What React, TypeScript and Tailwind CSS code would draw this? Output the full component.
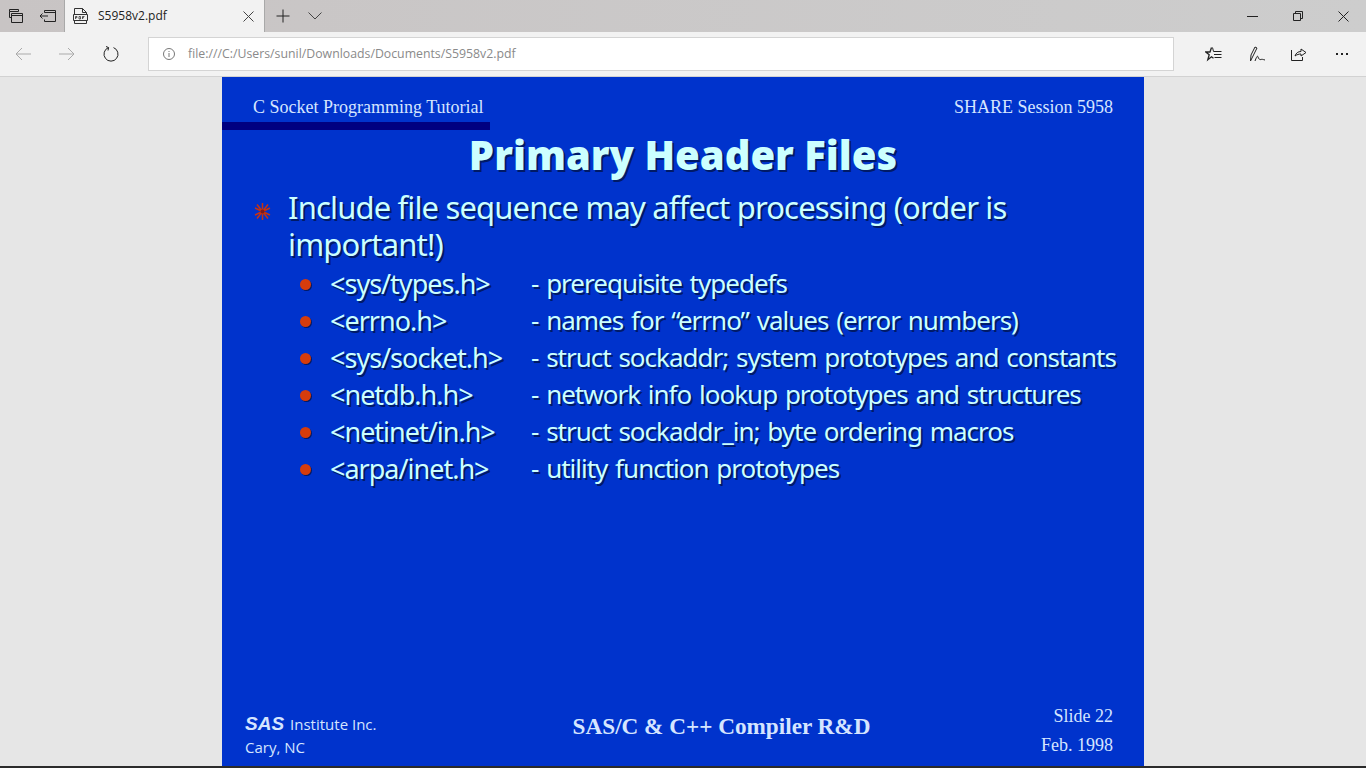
const FILES = [
  { name: '<sys/types.h>', desc: '- prerequisite typedefs' },
  { name: '<errno.h>', desc: '- names for “errno” values (error numbers)' },
  { name: '<sys/socket.h>', desc: '- struct sockaddr; system prototypes and constants' },
  { name: '<netdb.h.h>', desc: '- network info lookup prototypes and structures' },
  { name: '<netinet/in.h>', desc: '- struct sockaddr_in; byte ordering macros' },
  { name: '<arpa/inet.h>', desc: '- utility function prototypes' },
];

function TabBar() {
  return (
    <div className="flex h-[32px] bg-gradient-to-r from-[#c8c4c4] to-[#cdcdcd] text-[#1a1a1a]">
      <div className="flex items-center w-[65px] pl-[9px] gap-[15px] border-r border-[#a9a9a9]">
        <svg width="15" height="14" viewBox="0 0 15 14" fill="none" stroke="#222" strokeWidth="1">
          <path d="M.5.5h9v2h-9zM.5 2.500v6h2M2.500 4.500h11v9h-11v-9zM2.500 6.500h11" />
        </svg>
        <svg width="17" height="12" viewBox="0 0 17 12" fill="none" stroke="#222" strokeWidth="1">
          <path d="M5.500 2.500v-2h11v11h-11v-2M5.500 2.500h11M9 6H1M3.500 3.500 1 6l2.500 2.500" />
        </svg>
      </div>
      <div className="flex items-center w-[200px] bg-[#f2f2f2] pl-[8px] pr-[11px]">
        <svg width="15" height="16" viewBox="0 0 15 16" fill="none" stroke="#333" strokeWidth="1">
          <path d="M1.500 6V.5h8l4 4V6M9.500.5v4h4M1.500 13v2.500h12V13M.5 6.500h14v6H.5z" />
          <path d="M2.500 11V8.500h1.500v1.200H2.500M6 8.500v2.500h1.500V8.500zM9.500 11V8.500h2M9.500 9.700h1.500" strokeWidth=".8" />
        </svg>
        <span className="ml-[10px] text-[12px] text-[#222] font-['Open_Sans',sans-serif]">S5958v2.pdf</span>
        <svg className="ml-auto" width="11" height="11" viewBox="0 0 11 11" fill="none" stroke="#444" strokeWidth="1">
          <path d="m.5.500 10 10M10.500.500l-10 10" />
        </svg>
      </div>
      <div className="flex items-center pl-[11px] border-l border-[#a9a9a9] -ml-px">
        <svg width="14" height="14" viewBox="0 0 14 14" fill="none" stroke="#222" strokeWidth="1">
          <path d="M7 .5v13M.5 7h13" />
        </svg>
        <svg className="ml-[18px]" width="14" height="8" viewBox="0 0 14 8" fill="none" stroke="#444" strokeWidth="1">
          <path d="m.5.500 6.500 6.500 6.500-6.500" />
        </svg>
      </div>
      <div className="ml-auto flex items-center">
        <div className="w-[46px] flex justify-center">
          <svg width="11" height="11" viewBox="0 0 11 11" stroke="#222"><path d="M0 5.500h11" /></svg>
        </div>
        <div className="w-[46px] flex justify-center">
          <svg width="10" height="10" viewBox="0 0 10 10" fill="none" stroke="#222"><path d="M.5 2.500h7v7h-7zM2.500 2.500v-2h7v7h-2" /></svg>
        </div>
        <div className="w-[45px] flex justify-center">
          <svg width="11" height="11" viewBox="0 0 11 11" fill="none" stroke="#222"><path d="m.5.500 10 10M10.500.500l-10 10" /></svg>
        </div>
      </div>
    </div>
  );
}

function Toolbar() {
  return (
    <div className="flex items-center h-[44px] bg-[#f2f2f2] border-b border-[#d2d2d2] box-content">
      <div className="flex items-center w-[148px] pl-[15px]">
        <svg width="16" height="14" viewBox="0 0 16 14" fill="none" stroke="#aaa"><path d="M16 7H1M7 1 1 7l6 6" /></svg>
        <svg className="ml-[28px]" width="16" height="14" viewBox="0 0 16 14" fill="none" stroke="#aaa"><path d="M0 7h15M9 1l6 6-6 6" /></svg>
        <svg className="ml-[28px]" width="16" height="16" viewBox="0 0 16 16" fill="none" stroke="#222"><path d="M5.500 1.600A7 7 0 1 0 10.500 1.600M3 .5l2.600 1.100L5 4.500" /></svg>
      </div>
      <div className="flex items-center w-[1026px] h-[34px] bg-white border border-[#d4d4d4] pl-[14px]">
        <svg width="12" height="12" viewBox="0 0 12 12" fill="none" stroke="#777"><circle cx="6" cy="6" r="5.500" /><path d="M6 5v4M6 3v1" /></svg>
        <span className="ml-[13px] mt-[1px] text-[12.300px] text-[#8a8a8a] font-['Open_Sans',sans-serif]">file:///C:/Users/sunil/Downloads/Documents/S5958v2.pdf</span>
      </div>
      <div className="flex items-center flex-1 pl-[31px]">
        <svg width="17" height="17" viewBox="0 0 17 17" fill="none" stroke="#222">
          <path d="M6.500 1.500 5 6H.8l3.400 2.700-1.400 5 3.700-3 2 1.500" strokeWidth="1.300" />
          <path d="M7.500 1.500 8.500 5.500H16.500M9 8.500h7.500M9.500 11.500h7" />
        </svg>
        <svg className="ml-[27px]" width="17" height="17" viewBox="0 0 17 17" fill="none" stroke="#222">
          <path d="M1.500 15 2 9l4-8 2 1-4 8zM6 15c1.500-4 2.500-6 3-4s2 3 3 2.500 2 0 4 .5" />
        </svg>
        <svg className="ml-[25px]" width="16" height="14" viewBox="0 0 16 14" fill="none" stroke="#222">
          <path d="M.5 3v10.500h11V10M4 9c1-3 3-4.500 6-4.500V2l5 3.500L10 9V7C8 7 6 7.500 4 9z" />
        </svg>
        <span className="ml-[29px] flex gap-[3px]">
          <i className="w-[2px] h-[2px] bg-[#222]" />
          <i className="w-[2px] h-[2px] bg-[#222]" />
          <i className="w-[2px] h-[2px] bg-[#222]" />
        </span>
      </div>
    </div>
  );
}

function Slide() {
  return (
    <div className="flex flex-col w-[922px] h-[689px] bg-[#0033cc] text-[#ccffff] font-['Noto_Sans',sans-serif]">
      <div className="flex justify-between items-start pt-[18px] px-[31px] h-[45px] font-['Liberation_Serif',serif] text-[18px] leading-[24px] text-[#d5e5ff]">
        <span>C Socket Programming Tutorial</span>
        <span>SHARE Session 5958</span>
      </div>
      <div className="w-[268px] h-[8px] bg-[#000080]" />
      <h1 className="mt-[2px] text-center text-[40px] leading-[46px] font-black [text-shadow:2px_2px_0_#001a66]">
        Primary Header Files
      </h1>
      <div className="flex mt-[11px] pl-[32px] [text-shadow:2px_2px_0_#001a66]">
        <svg className="mt-[14px] shrink-0" width="17" height="17" viewBox="0 0 17 17" stroke="#c8320f" strokeWidth="1.500">
          <path d="M8.500 0v17M1 5l15 7M1 12l15-7M3 1.500l11 14M14 1.500l-11 14" />
          <circle cx="8.500" cy="8.500" r="2" fill="#7a1a20" stroke="none" />
        </svg>
        <p className="ml-[17px] w-[800px] text-[31px] leading-[37px] tracking-[-0.85px]">
          Include file sequence may affect processing (order is important!)
        </p>
      </div>
      <ul className="flex flex-col mt-[2px] pl-[78px] text-[27px] leading-[37px] tracking-[-1px] [word-spacing:2px] [text-shadow:2px_2px_0_#001a66]">
        {FILES.map((f) => (
          <li key={f.name} className="flex items-center">
            <span className="mt-[2px] w-[11px] h-[11px] rounded-full bg-[#d63c0c] shadow-[1px_1px_0_#001a66]" />
            <span className="ml-[19px] w-[201px] whitespace-nowrap">{f.name}</span>
            <span className="text-[26px] whitespace-nowrap">{f.desc}</span>
          </li>
        ))}
      </ul>
      <div className="mt-auto flex items-end justify-between pl-[23px] pr-[31px] pb-[6px] text-[#d5e5ff]">
        <div className="w-[250px] mb-[1px] text-[15px] leading-[23px] font-['Open_Sans',sans-serif]">
          <div>
            <span className="font-['Liberation_Sans',sans-serif] font-bold italic text-[19px] mr-[6px]">SAS</span>
            Institute Inc.
          </div>
          <div>Cary, NC</div>
        </div>
        <div className="font-['Liberation_Serif',serif] font-bold text-[23.200px] pb-[16px] pr-[93px]">SAS/C &amp; C++ Compiler R&amp;D</div>
        <div className="font-['Liberation_Serif',serif] text-[18px] leading-[29px] text-right">
          <div>Slide 22</div>
          <div>Feb. 1998</div>
        </div>
      </div>
    </div>
  );
}

export default function App() {
  return (
    <div className="flex flex-col w-[1366px] h-[768px] overflow-hidden bg-[#e6e6e6]">
      <TabBar />
      <Toolbar />
      <div className="flex flex-1 justify-center">
        <Slide />
      </div>
      <div className="h-[2px] bg-[#2b2b2b] shrink-0 -mt-[2px] relative" />
    </div>
  );
}
